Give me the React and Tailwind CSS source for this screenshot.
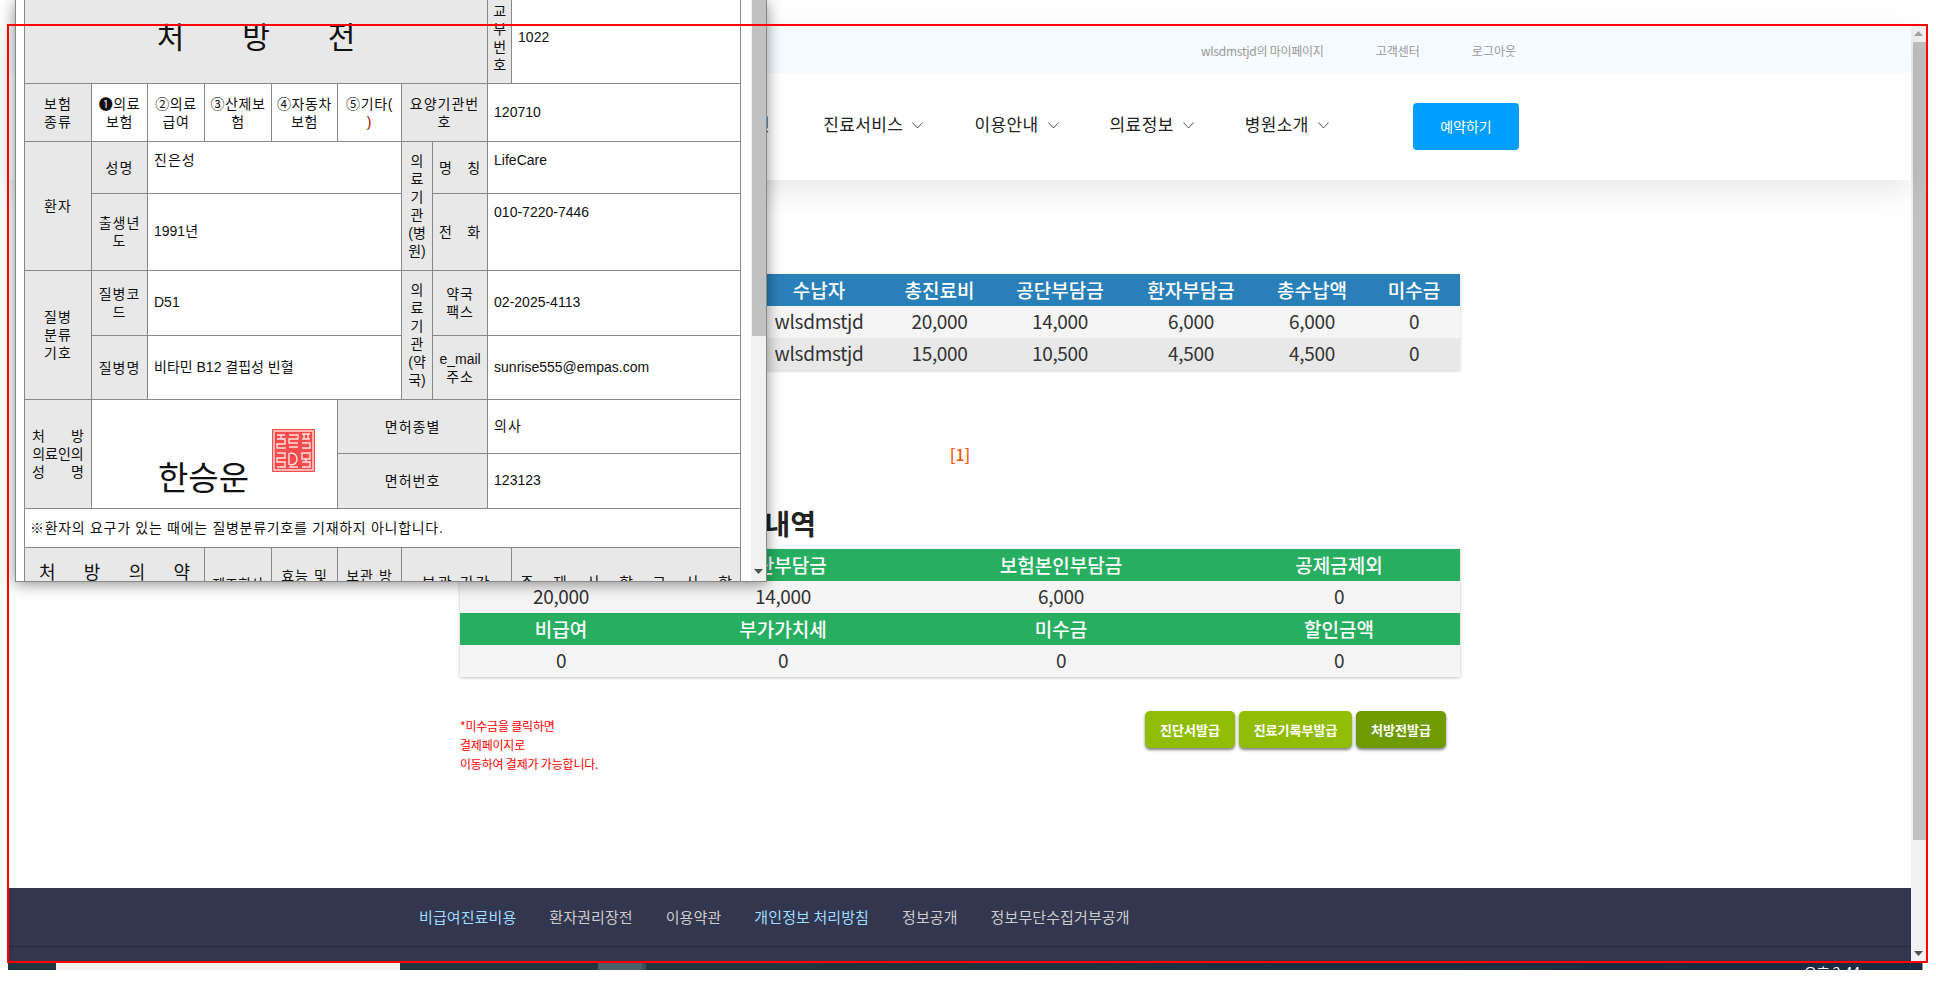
import { useState } from 'react';

const labelCell = 'border border-[#888] bg-[#e8e8e8] text-center tracking-[1px]';
const valueCell = 'border border-[#888] pl-[6px]';

function Chevron() {
    return (
        <svg width="11" height="7" viewBox="0 0 11 7" fill="none" stroke="#555" strokeWidth="1" className="mt-[3px]" aria-hidden="true">
            <path d="M0.5 0.5L5.5 6L10.5 0.5" />
        </svg>
    );
}

function Seal() {
    return (
        <svg width="43" height="43" viewBox="0 0 43 43" className="absolute left-[180px] top-[29px]" aria-hidden="true">
            <rect width="43" height="43" rx="1" fill="#f54b4b" />
            <g fill="none" stroke="#ffe3e3" strokeWidth="1.4">
                <rect x="2" y="2" width="39" height="39" />
                <path d="M5 6h8M5 10h8v5H5v4h9M9 6v4" />
                <path d="M17 6h9v4h-9v4h9M17 18h9" />
                <path d="M30 5h8M32 5v5M36 5v5M30 10h8M30 14h8v5h-8" />
                <path d="M5 24h8v5H5v4h8v5H5" />
                <path d="M18 24c5 0 7 3 7 6s-2 6-7 6M17 24v12M17 38h9" />
                <path d="M30 24h8v6h-8zM34 30v3M30 33h8v5h-8" />
            </g>
        </svg>
    );
}

function Prescription() {
    return (
        <table className="mt-[-9px] w-[716px] table-fixed border-collapse text-[14px] leading-[18px] text-[#111]">
            <colgroup>
                <col className="w-[67px]" />
                <col className="w-[56px]" />
                <col className="w-[57px]" />
                <col className="w-[67px]" />
                <col className="w-[66px]" />
                <col className="w-[64px]" />
                <col className="w-[31px]" />
                <col className="w-[55px]" />
                <col className="w-[24px]" />
                <col className="w-[229px]" />
            </colgroup>
            <tbody>
                <tr className="h-[92px]">
                    <td colSpan={8} className={labelCell}>
                        <div className="flex justify-center gap-[58px] text-[30px] leading-[36px] tracking-normal">
                            <span>처</span>
                            <span>방</span>
                            <span>전</span>
                        </div>
                    </td>
                    <td className={labelCell + ' tracking-normal'}>교<br />부<br />번<br />호</td>
                    <td className={valueCell + ' pb-[2px]'}>1022</td>
                </tr>
                <tr className="h-[58px]">
                    <td className={labelCell}>보험<br />종류</td>
                    <td className="border border-[#888] text-center tracking-[0.6px]">❶의료<br />보험</td>
                    <td className="border border-[#888] text-center tracking-[0.6px]">②의료<br />급여</td>
                    <td className="border border-[#888] text-center tracking-[0.6px]">③산제보<br />험</td>
                    <td className="border border-[#888] text-center tracking-[0.6px]">④자동차<br />보험</td>
                    <td className="border border-[#888] text-center tracking-[0.6px]">⑤기타(<br /><span className="text-[#a00]">)</span></td>
                    <td colSpan={2} className={labelCell}>요양기관번<br />호</td>
                    <td colSpan={2} className={valueCell + ' pb-[2px]'}>120710</td>
                </tr>
                <tr className="h-[52px]">
                    <td rowSpan={2} className={labelCell}>환자</td>
                    <td className={labelCell}>성명</td>
                    <td colSpan={4} className={valueCell + ' pt-[9px] align-top tracking-[1px]'}>진은성</td>
                    <td rowSpan={2} className={labelCell + ' tracking-normal'}>의<br />료<br />기<br />관<br />(병<br />원)</td>
                    <td className={labelCell}>
                        <div className="flex justify-between px-[6px]"><span>명</span><span>칭</span></div>
                    </td>
                    <td colSpan={2} className={valueCell + ' pt-[9px] align-top'}>LifeCare</td>
                </tr>
                <tr className="h-[77px]">
                    <td className={labelCell}>출생년<br />도</td>
                    <td colSpan={4} className={valueCell + ' pb-[2px]'}>1991년</td>
                    <td className={labelCell}>
                        <div className="flex justify-between px-[6px]"><span>전</span><span>화</span></div>
                    </td>
                    <td colSpan={2} className={valueCell + ' pt-[9px] align-top'}>010-7220-7446</td>
                </tr>
                <tr className="h-[65px]">
                    <td rowSpan={2} className={labelCell}>질병<br />분류<br />기호</td>
                    <td className={labelCell}>질병코<br />드</td>
                    <td colSpan={4} className={valueCell + ' pb-[2px]'}>D51</td>
                    <td rowSpan={2} className={labelCell + ' tracking-normal'}>의<br />료<br />기<br />관<br />(약<br />국)</td>
                    <td className={labelCell}>약국<br />팩스</td>
                    <td colSpan={2} className={valueCell + ' pb-[2px]'}>02-2025-4113</td>
                </tr>
                <tr className="h-[64px]">
                    <td className={labelCell}>질병명</td>
                    <td colSpan={4} className={valueCell + ' pb-[2px]'}>비타민 B12 결핍성 빈혈</td>
                    <td className={labelCell + ' tracking-normal'}>e_mail<br /><span className="tracking-[1px]">주소</span></td>
                    <td colSpan={2} className={valueCell + ' pb-[2px]'}>sunrise555@empas.com</td>
                </tr>
                <tr className="h-[54px]">
                    <td rowSpan={2} className={labelCell + ' tracking-normal'}>
                        <div className="flex justify-between px-[7px]"><span>처</span><span>방</span></div>
                        <div>의료인의</div>
                        <div className="flex justify-between px-[7px]"><span>성</span><span>명</span></div>
                    </td>
                    <td rowSpan={2} colSpan={4} className="relative border border-[#888] pb-[9px] pl-[66px] align-bottom">
                        <span className="text-[33px] leading-[40px]">한승운</span>
                        <Seal />
                    </td>
                    <td colSpan={3} className={labelCell}>면허종별</td>
                    <td colSpan={2} className={valueCell + ' pb-[2px] tracking-[1px]'}>의사</td>
                </tr>
                <tr className="h-[55px]">
                    <td colSpan={3} className={labelCell}>면허번호</td>
                    <td colSpan={2} className={valueCell + ' pb-[2px]'}>123123</td>
                </tr>
                <tr className="h-[39px]">
                    <td colSpan={10} className="border border-[#888] pl-[5px] tracking-[0.7px]">※환자의 요구가 있는 때에는 질병분류기호를 기재하지 아니합니다.</td>
                </tr>
                <tr className="h-[70px] align-top">
                    <td colSpan={3} className={labelCell + ' pt-[13px] text-[18px] leading-[24px] tracking-normal'}>
                        <div className="flex justify-between px-[14px]"><span>처</span><span>방</span><span>의</span><span>약</span></div>
                    </td>
                    <td className={labelCell + ' pt-[27px] tracking-normal'}>제조회사</td>
                    <td className={labelCell + ' pt-[19px]'}>효능 및</td>
                    <td className={labelCell + ' pt-[19px]'}>보관 방</td>
                    <td colSpan={3} className={labelCell + ' pt-[26px] text-[15px] tracking-[2px]'}>보관 기간</td>
                    <td className={labelCell + ' pt-[26px] text-[15px] tracking-normal'}>
                        <div className="flex justify-between px-[8px]"><span>주</span><span>제</span><span>사</span><span>항</span><span>그</span><span>사</span><span>항</span></div>
                    </td>
                </tr>
            </tbody>
        </table>
    );
}

function PrescriptionPopup() {
    return (
        <div className="absolute left-[15px] top-0 z-20 flex h-[582px] w-[752px] border-x border-b border-[#888] bg-white font-['Liberation_Sans','Noto_Sans_CJK_KR',sans-serif] shadow-[0_2px_14px_rgba(0,0,0,0.45)]">
            <div className="min-w-0 flex-1 overflow-hidden pl-[8px]">
                <Prescription />
            </div>
            <div className="relative w-[15px] shrink-0 bg-[#f1f1f1]">
                <div className="ml-[1px] h-[336px] bg-[#c1c1c1]" />
                <svg width="9" height="5" viewBox="0 0 9 5" className="absolute bottom-[7px] left-[3px]" aria-hidden="true"><path d="M0 0h9L4.5 5z" fill="#505050" /></svg>
            </div>
        </div>
    );
}

function NavItem({ label }) {
    return (
        <div className="flex items-center gap-[9px] pb-[5px] text-[17px] leading-[24px] tracking-[0.4px] text-[#222]">
            <span>{label}</span>
            <Chevron />
        </div>
    );
}

function PageScrollbar() {
    return (
        <div className="relative w-[15px] shrink-0 bg-[#f1f1f1]">
            <svg width="9" height="5" viewBox="0 0 9 5" className="absolute left-[3px] top-[5px]" aria-hidden="true"><path d="M0 5h9L4.5 0z" fill="#a3a3a3" /></svg>
            <div className="ml-[2px] mt-[16px] h-[798px] bg-[#c1c1c1]" />
            <svg width="9" height="5" viewBox="0 0 9 5" className="absolute bottom-[6px] left-[3px]" aria-hidden="true"><path d="M0 0h9L4.5 5z" fill="#505050" /></svg>
        </div>
    );
}

const paymentRows = [
    ['wlsdmstjd', '20,000', '14,000', '6,000', '6,000', '0'],
    ['wlsdmstjd', '15,000', '10,500', '4,500', '4,500', '0'],
];

function PaymentTable() {
    return (
        <table className="w-[1000px] table-fixed border-collapse text-center text-[19px] leading-[32px] text-[#333] shadow-[0_1px_3px_rgba(0,0,0,0.2)]">
            <colgroup>
                <col className="w-[146px]" />
                <col className="w-[147px]" />
                <col className="w-[132px]" />
                <col className="w-[109px]" />
                <col className="w-[132px]" />
                <col className="w-[130px]" />
                <col className="w-[112px]" />
                <col className="w-[92px]" />
            </colgroup>
            <thead>
                <tr className="bg-[#2980b9] text-[19px] text-white">
                    <th className="font-medium">번호</th>
                    <th className="font-medium">수납일자</th>
                    <th className="font-medium">수납자</th>
                    <th className="font-medium">총진료비</th>
                    <th className="font-medium">공단부담금</th>
                    <th className="font-medium">환자부담금</th>
                    <th className="font-medium">총수납액</th>
                    <th className="font-medium">미수금</th>
                </tr>
            </thead>
            <tbody>
                {paymentRows.map((row, index) => (
                    <tr key={index} className={index === 0 ? 'bg-[#f5f5f5]' : 'bg-[#e8e8e8]'}>
                        <td className="leading-[30px] pb-[2px]">{index + 1}</td>
                        <td className="leading-[30px] pb-[2px]">2020-07-10</td>
                        {row.map((value, i) => (
                            <td key={i} className="pb-[2px] leading-[30px] tracking-[-0.3px]">{value}</td>
                        ))}
                    </tr>
                ))}
            </tbody>
        </table>
    );
}

function DetailTable() {
    const head = 'bg-[#27ae60] text-[19px] font-medium text-white';
    const row = 'pb-[2px] leading-[30px] tracking-[-0.3px]';
    return (
        <table className="w-[1000px] table-fixed border-collapse bg-[#f5f5f5] text-center text-[19px] leading-[32px] text-[#333] shadow-[0_1px_3px_rgba(0,0,0,0.25)]">
            <colgroup>
                <col className="w-[202px]" />
                <col className="w-[242px]" />
                <col className="w-[314px]" />
                <col className="w-[242px]" />
            </colgroup>
            <tbody>
                <tr className={head}>
                    <td>총진료비</td>
                    <td>공단부담금</td>
                    <td>보험본인부담금</td>
                    <td>공제금제외</td>
                </tr>
                <tr>
                    <td className={row}>20,000</td>
                    <td className={row}>14,000</td>
                    <td className={row}>6,000</td>
                    <td className={row}>0</td>
                </tr>
                <tr className={head}>
                    <td>비급여</td>
                    <td>부가가치세</td>
                    <td>미수금</td>
                    <td>할인금액</td>
                </tr>
                <tr>
                    <td className={row}>0</td>
                    <td className={row}>0</td>
                    <td className={row}>0</td>
                    <td className={row}>0</td>
                </tr>
            </tbody>
        </table>
    );
}

export default function App() {
    const [page] = useState(1);

    return (
        <div className="relative flex h-[987px] w-[1936px] flex-col overflow-hidden bg-white font-['Noto_Sans_CJK_KR',sans-serif]">
            <PrescriptionPopup />
            <div className="pointer-events-none absolute left-[7px] top-[24px] z-30 h-[939px] w-[1921px] border-2 border-[#f00]" />

            <div className="mt-[26px] flex h-[936px] shrink-0 pl-[9px] pr-[10px]">
                <main className="flex min-w-0 flex-1 flex-col">
                    <header className="relative z-10 shadow-[0_10px_30px_rgba(0,0,0,0.1)]">
                        <div className="flex h-[47px] items-center justify-end gap-[52px] bg-[#f5fbff] pr-[395px] pt-[2px] text-[12px] text-[#999]">
                            <span className="tracking-[-0.25px]">wlsdmstjd의 마이페이지</span>
                            <span>고객센터</span>
                            <span>로그아웃</span>
                        </div>
                        <nav className="flex h-[107px] items-center gap-[51px] bg-white pl-[697px]">
                            <span className="mr-[2px] pb-[5px] text-[17px] leading-[24px] tracking-[0.4px] text-[#222]">건강검진</span>
                            <NavItem label="진료서비스" />
                            <NavItem label="이용안내" />
                            <NavItem label="의료정보" />
                            <NavItem label="병원소개" />
                            <button type="button" className="ml-[33px] h-[47px] w-[106px] rounded-[4px] bg-[#009fff] text-[14px] text-white">예약하기</button>
                        </nav>
                    </header>

                    <div className="mx-auto flex w-[1000px] flex-1 flex-col pt-[94px]">
                        <PaymentTable />
                        <div className="mt-[74px] text-center text-[16px] font-medium leading-[20px] text-[#f50]">[{page}]</div>
                        <h2 className="mt-[39px] pl-[253px] text-[28px] font-bold leading-[40px] text-[#222]">수납내역</h2>
                        <div className="mt-[6px]">
                            <DetailTable />
                        </div>
                        <div className="mt-[34px] flex items-start justify-between pr-[14px]">
                            <div className="pt-[5px] text-[12px] leading-[19px] tracking-[-0.2px] text-[#f00]">
                                <p>*미수금을 클릭하면</p>
                                <p>결제페이지로</p>
                                <p>이동하여 결제가 가능합니다.</p>
                            </div>
                            <div className="flex gap-[4px] text-[13px] font-bold text-white">
                                <button type="button" className="h-[37px] w-[90px] rounded-[5px] bg-[#92bd07] shadow-[0_2px_3px_rgba(0,0,0,0.5)]">진단서발급</button>
                                <button type="button" className="h-[37px] w-[113px] rounded-[5px] bg-[#92bd07] shadow-[0_2px_3px_rgba(0,0,0,0.5)]">진료기록부발급</button>
                                <button type="button" className="h-[37px] w-[90px] rounded-[5px] bg-[#6f9a00] shadow-[0_2px_3px_rgba(0,0,0,0.5)]">처방전발급</button>
                            </div>
                        </div>
                    </div>

                    <footer className="h-[74px] shrink-0 bg-[#32364f]">
                        <div className="flex h-[59px] items-center gap-[33px] border-b border-[#272a3d] pl-[410px] text-[15px] tracking-[0.1px] text-[#ccc]">
                            <span className="text-[#9fdcff]">비급여진료비용</span>
                            <span>환자권리장전</span>
                            <span>이용약관</span>
                            <span className="text-[#9fdcff]">개인정보 처리방침</span>
                            <span>정보공개</span>
                            <span>정보무단수집거부공개</span>
                        </div>
                    </footer>
                </main>
                <PageScrollbar />
            </div>

            {/* desktop taskbar cut off under the capture */}
            <div className="ml-[8px] flex h-[8px] w-[1915px] shrink-0 overflow-hidden border-r border-[#8a95a5] bg-[#203640]">
                <div className="w-[48px] shrink-0" />
                <div className="w-[344px] shrink-0 bg-[#f0f0f0]" />
                <div className="w-[198px] shrink-0" />
                <div className="w-[44px] shrink-0 bg-[#4d606a]" />
                <div className="w-[4px] shrink-0 bg-[#3d4f59]" />
                <div className="flex flex-1 justify-end bg-gradient-to-r from-[#203640] to-[#1b2a44] pr-[62px] text-[14px] leading-[20px] text-white">
                    <span>오후 2:44</span>
                </div>
            </div>
        </div>
    );
}
